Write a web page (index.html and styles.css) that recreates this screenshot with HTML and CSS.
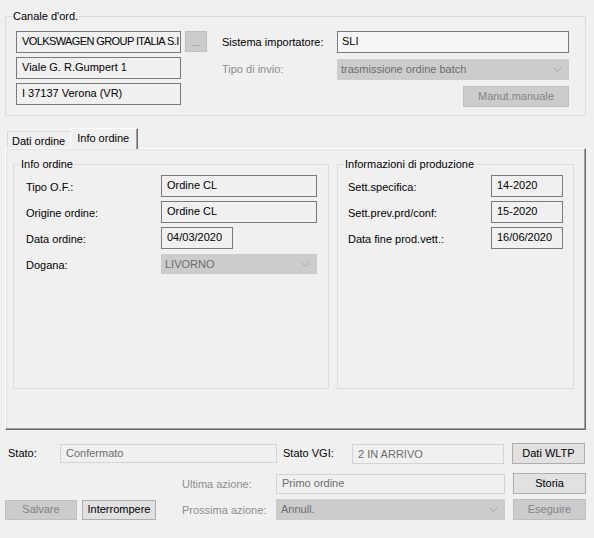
FILE: index.html
```html
<!DOCTYPE html>
<html>
<head>
<meta charset="utf-8">
<link rel="stylesheet" href="styles.css">
</head>
<body>
<div class="window">
  <div class="group canale">
    <div class="group-title">Canale d'ord.</div>
    <div class="canale-body">
      <div class="addr-col">
        <div class="addr-row">
          <div class="box addr tight">VOLKSWAGEN GROUP ITALIA S.I</div>
          <div class="btn disabled dots">...</div>
        </div>
        <div class="box addr">Viale G. R.Gumpert 1</div>
        <div class="box addr">I 37137 Verona (VR)</div>
      </div>
      <div class="imp-grid">
        <div class="lbl">Sistema importatore:</div>
        <div class="box sli">SLI</div>
        <div class="lbl gray">Tipo di invio:</div>
        <div class="combo disabled invio"><span>trasmissione ordine batch</span><svg class="chev" width="9" height="5" viewBox="0 0 9 5"><polyline points="0.5,0.5 4.5,4.5 8.5,0.5" fill="none" stroke="#a8a8a8" stroke-width="1"/></svg></div>
        <div></div>
        <div class="btn disabled manut">Manut.manuale</div>
      </div>
    </div>
  </div>

  <div class="tabs">
    <div class="tab">Dati ordine</div>
    <div class="tab active">Info ordine</div>
  </div>
  <div class="panel">
    <div class="group info">
      <div class="group-title">Info ordine</div>
      <div class="form form-left">
        <div class="lbl">Tipo O.F.:</div>
        <div class="box wide">Ordine CL</div>
        <div class="lbl">Origine ordine:</div>
        <div class="box wide">Ordine CL</div>
        <div class="lbl">Data ordine:</div>
        <div class="box short">04/03/2020</div>
        <div class="lbl">Dogana:</div>
        <div class="combo disabled wide dogana"><span>LIVORNO</span><svg class="chev" width="9" height="5" viewBox="0 0 9 5"><polyline points="0.5,0.5 4.5,4.5 8.5,0.5" fill="none" stroke="#a8a8a8" stroke-width="1"/></svg></div>
      </div>
    </div>
    <div class="group prod">
      <div class="group-title">Informazioni di produzione</div>
      <div class="form form-right">
        <div class="lbl">Sett.specifica:</div>
        <div class="box short">14-2020</div>
        <div class="lbl">Sett.prev.prd/conf:</div>
        <div class="box short">15-2020</div>
        <div class="lbl">Data fine prod.vett.:</div>
        <div class="box short">16/06/2020</div>
      </div>
    </div>
  </div>

  <div class="bottom">
    <div class="brow row1">
      <div class="lbl stato-lbl">Stato:</div>
      <div class="tbox stato">Confermato</div>
      <div class="lbl vgi-lbl">Stato VGI:</div>
      <div class="tbox vgi">2 IN ARRIVO</div>
      <div class="btn side">Dati WLTP</div>
    </div>
    <div class="brow row2">
      <div class="lbl gray act-lbl">Ultima azione:</div>
      <div class="tbox act">Primo ordine</div>
      <div class="btn side">Storia</div>
    </div>
    <div class="brow row3">
      <div class="btn disabled salvare">Salvare</div>
      <div class="btn interr">Interrompere</div>
      <div class="lbl gray act-lbl">Prossima azione:</div>
      <div class="combo disabled next"><span>Annull.</span><svg class="chev" width="9" height="5" viewBox="0 0 9 5"><polyline points="0.5,0.5 4.5,4.5 8.5,0.5" fill="none" stroke="#a8a8a8" stroke-width="1"/></svg></div>
      <div class="btn disabled side">Eseguire</div>
    </div>
  </div>
</div>
</body>
</html>
```

FILE: styles.css
```css
html, body {
  margin: 0;
  padding: 0;
  background: #f0f0f0;
}
body {
  font-family: "Liberation Sans", Arial, sans-serif;
  font-size: 11px;
  color: #000;
}
.window {
  width: 594px;
  height: 538px;
  overflow: hidden;
  display: flex;
  flex-direction: column;
}
* { box-sizing: border-box; }

.group {
  border: 1px solid #dcdcdc;
  display: flex;
  flex-direction: column;
  align-items: flex-start;
}
.group-title {
  margin: -7px 0 0 6px;
  padding: 0 1px;
  height: 13px;
  line-height: 13px;
  background: #f0f0f0;
  white-space: nowrap;
}

.canale {
  margin: 16px 0 0 5px;
  width: 581px;
  height: 100px;
}
.canale-body {
  display: flex;
  margin-top: 8px;
  padding-left: 10px;
}
.addr-col {
  display: flex;
  flex-direction: column;
  gap: 4px;
  width: 191px;
}
.addr-row {
  display: flex;
  gap: 4px;
}
.box {
  border: 1px solid #7a7a7a;
  background: #f0f0f0;
  height: 22px;
  display: flex;
  align-items: center;
  padding: 0 0 2px 5px;
  white-space: nowrap;
  overflow: hidden;
}
.addr { width: 165px; }
.tight { letter-spacing: -0.6px; }
.btn {
  border: 1px solid #adadad;
  background: #e1e1e1;
  display: flex;
  align-items: center;
  justify-content: center;
  white-space: nowrap;
  padding-bottom: 1px;
}
.btn.disabled {
  border-color: #bfbfbf;
  background: #cccccc;
  color: #838383;
}
.dots {
  width: 22px;
  height: 21px;
  align-items: flex-end;
  padding-bottom: 3px;
  font-size: 9px;
}
.imp-grid {
  margin-left: 15px;
  display: grid;
  grid-template-columns: 115px 232px;
  grid-template-rows: 22px 20px 21px;
  row-gap: 6px;
  align-items: center;
}
.lbl { white-space: nowrap; }
.gray { color: #8d8d8d; }
.sli { background: #f6f6f6; padding-left: 4px; }
.combo {
  display: flex;
  align-items: center;
  justify-content: space-between;
  border: 1px solid #cccccc;
  white-space: nowrap;
}
.combo.disabled {
  background: #cccccc;
  color: #6d6d6d;
}
.combo span { padding-bottom: 1px; }
.chev { margin-right: 6px; flex: none; }
.invio { height: 21px; padding-left: 3px; }
.manut {
  justify-self: end;
  width: 106px;
  height: 21px;
  margin-top: 1px;
}

.tabs {
  display: flex;
  align-items: flex-end;
  margin: 12px 0 0 7px;
  height: 20px;
}
.tab {
  height: 17px;
  padding: 0 5px 0 4px;
  border-top: 1px solid #d9d9d9;
  border-left: 1px solid #d9d9d9;
  display: flex;
  align-items: center;
  padding-top: 1px;
}
.tab.active {
  height: 21px;
  margin-bottom: -1px;
  padding: 0 8px 3px 6px;
  border-top: 1px solid #ffffff;
  border-left: 1px solid #ffffff;
  border-right: 1px solid #696969;
  box-shadow: inset -1px 0 0 #a0a0a0;
  background: #f0f0f0;
  position: relative;
  z-index: 1;
}

.panel {
  margin-left: 5px;
  width: 581px;
  height: 282px;
  border-top: 1px solid #ffffff;
  border-left: 1px solid #ffffff;
  border-right: 1px solid #696969;
  border-bottom: 1px solid #696969;
  box-shadow: inset -1px -1px 0 #a0a0a0, inset 1px 1px 0 #e3e3e3;
  display: flex;
  align-items: flex-start;
  gap: 8px;
  padding: 15px 0 0 7px;
}
.info { width: 316px; height: 225px; }
.prod { width: 237px; height: 225px; }
.form {
  display: grid;
  grid-auto-rows: 22px;
  row-gap: 4px;
  align-items: center;
  margin-top: 4px;
}
.form-left {
  padding-left: 12px;
  grid-template-columns: 135px 156px;
}
.form-right {
  padding-left: 10px;
  grid-template-columns: 143px 72px;
}
.form .lbl { padding-top: 2px; }
.wide { width: 156px; }
.short { width: 72px; }
.dogana { height: 20px; padding-left: 3px; }

.bottom {
  display: flex;
  flex-direction: column;
  margin-top: 13px;
}
.brow {
  display: flex;
  align-items: center;
}
.row1 { height: 21px; }
.row2 { height: 21px; margin-top: 9px; }
.row3 { height: 21px; margin-top: 5px; }
.tbox {
  border: 1px solid #d4d4d4;
  background: #f0f0f0;
  color: #6d6d6d;
  height: 19px;
  display: flex;
  align-items: center;
  padding: 0 0 1px 5px;
  white-space: nowrap;
}
.stato-lbl { width: 60px; padding-left: 8px; padding-bottom: 2px; }
.stato { width: 217px; }
.vgi-lbl { width: 75px; padding-left: 6px; padding-bottom: 2px; }
.vgi { width: 152px; height: 20px; margin-top: 1px; }
.side { width: 73px; height: 21px; margin-left: 8px; }
.act-lbl { width: 94px; }
.row2 .act-lbl { margin-left: 182px; }
.act { width: 229px; height: 20px; }
.salvare { margin-left: 5px; width: 72px; height: 20px; }
.interr { margin-left: 5px; width: 74px; height: 20px; }
.row3 .act-lbl { margin-left: 26px; }
.next { width: 229px; height: 21px; padding-left: 4px; }
```
